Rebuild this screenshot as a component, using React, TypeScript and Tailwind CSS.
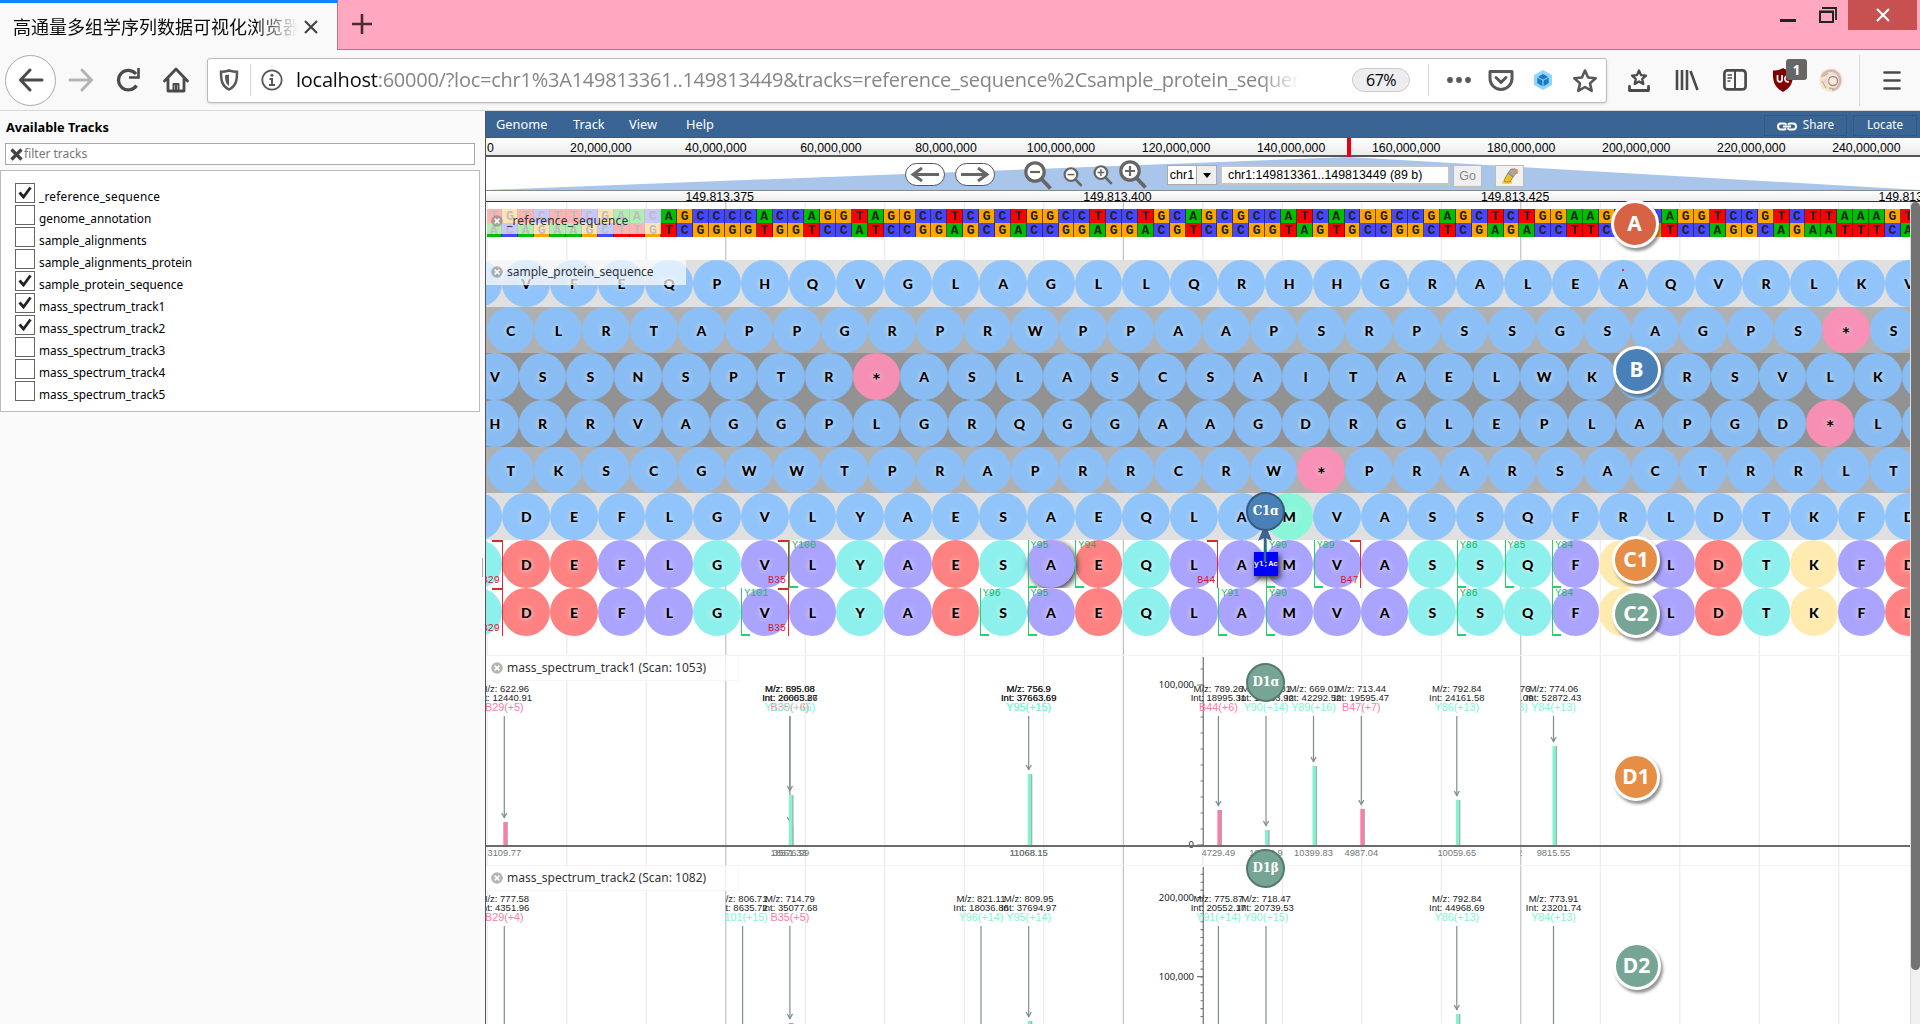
import React from "react";

const SANS = "font-['Noto_Sans',sans-serif]";
const ARIAL = "font-['Liberation_Sans',sans-serif]";
const PITCH = 15.9;
const AA = 47.7;

const TOP = "TGTCTTCGAACAGCCCCACCAGGTAGGCCTCGCTGGCCTCCTGCAGCGCCATCACGGCCGAGCTCTGGAAGCGCAGGTCCGTCTTAAAGT";
const COMP: Record<string, string> = { A: "T", T: "A", G: "C", C: "G" };
const BOTTOM = TOP.split("").map((c) => COMP[c]).join("");
const BASE: Record<string, string> = {
  A: "bg-[#00bf00]",
  C: "bg-[#4747ff]",
  G: "bg-[#ffa500]",
  T: "bg-[#ff0000]",
};

const FRAMES = [
  { bg: "bg-[#e0e0e0]", off: "ml-[-31.3px]", seq: " VFEQPHQVGLAGLLQRHHGRALEAQVRLKV" },
  { bg: "bg-[#b0b0b0]", off: "ml-[0.8px]", seq: "CLRTAPPGRPRWPPAAPSRPSSGSAGPS*S" },
  { bg: "bg-[#929292]", off: "ml-[-14.9px]", seq: "VSSNSPTR*ASLASCSAITAELWKRRSVLK " },
  { bg: "bg-[#929292]", off: "ml-[-14.9px]", seq: "HRRVAGGPLGRQGGAAGDRGLEPLAPGD*L " },
  { bg: "bg-[#b0b0b0]", off: "ml-[0.8px]", seq: "TKSCGWWTPRAPRRCRW*PRARSACTRRLT" },
  { bg: "bg-[#e0e0e0]", off: "ml-[-31.3px]", seq: " DEFLGVLYAESAEQLAMVASSQFRLDTKFD", hot: 17 },
];
const PEPTIDE = " DEFLGVLYAESAEQLAMVASSQFRLDTKFD";

const peptideColor = (c: string) => {
  if ("DE".includes(c)) return "bg-[#ff8282]";
  if ("FLVAM".includes(c)) return "bg-[#aba4ff]";
  if ("KR".includes(c)) return "bg-[#ffebaf]";
  return "bg-[#8df0ec]";
};

const LETTER =
  "text-[14px] font-black text-black [text-shadow:0_0_6px_rgba(255,255,255,0.7),0_0_3px_rgba(255,255,255,0.4)]";

type Mark = [string, number];

function Fragments({ marks }: { marks: Mark[] }) {
  return (
    <>
      {marks.map(([name, k]) => {
        const x = 16.8 + k * AA;
        return name[0] === "Y" ? (
          <div key={name} className="absolute top-0 h-full w-7 border-l border-[#2ecc71]" style={{ left: x }}>
            <span className="absolute left-0.5 top-0 font-['Liberation_Mono',monospace] text-[10px] leading-[11px] text-[#23b862]">
              {name}
            </span>
            <span className="absolute bottom-0 left-0 h-0.5 w-2 bg-[#2ecc71]" />
          </div>
        ) : (
          <div key={name} className="absolute top-0 h-full w-7 border-r border-[#e02c2c]" style={{ left: x - 28 }}>
            <span className="absolute right-0 top-0 h-0.5 w-2.5 bg-[#d42c2c]" />
            <span className="absolute bottom-0.5 right-0.5 font-['Liberation_Mono',monospace] text-[10px] leading-[11px] text-[#d02234]">
              {name}
            </span>
          </div>
        );
      })}
    </>
  );
}

function PeptideRow({ marks, raised }: { marks: Mark[]; raised?: number }) {
  return (
    <div className="relative h-12 overflow-hidden">
      <div className="ml-[-31.3px] flex h-full">
        {PEPTIDE.split("").map((c, i) => (
          <div
            key={i}
            className={`flex h-[48px] w-[47.7px] shrink-0 items-center justify-center rounded-full font-['Lato',sans-serif] ${peptideColor(c)} ${
              i === raised ? "relative shadow-[2px_2px_6px_#333]" : ""
            } ${LETTER}`}
          >
            {c}
          </div>
        ))}
      </div>
      <Fragments marks={marks} />
    </div>
  );
}

function TrackLabel({ children, className }: { children: React.ReactNode; className: string }) {
  return (
    <div
      className={`absolute left-0 flex h-[25px] items-center border-b border-r border-[#f0f0f0]/60 bg-white/70 pl-[5px] text-[12px] text-[#333] ${SANS} ${className}`}
    >
      <svg width="12" height="12" viewBox="0 0 12 12" className="mr-1 shrink-0">
        <circle cx="6" cy="6" r="5.8" fill="#777" opacity=".55" />
        <path d="M3.6 3.6l4.8 4.8M8.4 3.6L3.6 8.4" stroke="#fff" strokeWidth="1.5" />
      </svg>
      <span className="whitespace-nowrap">{children}</span>
    </div>
  );
}

interface Peak {
  x: number;
  mz: string;
  int: string;
  ion: string;
  top: number;
  value?: string;
  clip?: string;
  twice?: boolean;
}

const SPEC1: Peak[] = [
  { x: 504.3, mz: "622.96", int: "12440.91", ion: "B29(+5)", top: 822, value: "3109.77" },
  { x: 789.9, mz: "895.08", int: "20005.27", ion: "B35(+6)", top: 826, value: "3561.33" },
  { x: 789.9, mz: "595.68", int: "26663.86", ion: "Y100(+16)", top: 795, value: "18576.99" },
  { x: 1028.7, mz: "756.9", int: "37663.69", ion: "Y95(+15)", top: 774, value: "11068.15", twice: true },
  { x: 1218.4, mz: "789.26", int: "18995.31", ion: "B44(+6)", top: 810, value: "4729.49" },
  { x: 1266, mz: "733.01", int: "10063.92", ion: "Y90(+14)", top: 830, value: "10249.9" },
  { x: 1313.5, mz: "669.01", int: "42292.52", ion: "Y89(+16)", top: 766, value: "10399.83" },
  { x: 1361.3, mz: "713.44", int: "19595.47", ion: "B47(+7)", top: 809, value: "4987.04" },
  { x: 1456.8, mz: "792.84", int: "24161.58", ion: "Y86(+13)", top: 800, value: "10059.65" },
  { x: 1505.5, mz: "774.76", int: "20155.09", ion: "Y85(+13)", top: 0, value: "9942.52", clip: "url(#right-block)" },
  { x: 1553.5, mz: "774.06", int: "52872.43", ion: "Y84(+13)", top: 746, value: "9815.55" },
];
const SPEC2: Peak[] = [
  { x: 504.3, mz: "777.58", int: "4351.96", ion: "B29(+4)", top: 1080 },
  { x: 742.6, mz: "806.71", int: "8635.72", ion: "Y101(+15)", top: 1080, clip: "url(#left-block)" },
  { x: 789.9, mz: "714.79", int: "35077.68", ion: "B35(+5)", top: 1023 },
  { x: 981, mz: "821.11", int: "18036.86", ion: "Y96(+14)", top: 1080 },
  { x: 1028.7, mz: "809.95", int: "37694.97", ion: "Y95(+14)", top: 1021 },
  { x: 1218.4, mz: "775.87", int: "20552.17", ion: "Y91(+14)", top: 1080 },
  { x: 1266, mz: "718.47", int: "20739.53", ion: "Y90(+15)", top: 1080 },
  { x: 1456.8, mz: "792.84", int: "44968.69", ion: "Y86(+13)", top: 1014 },
  { x: 1553.5, mz: "773.91", int: "23201.74", ion: "Y84(+13)", top: 1080 },
];

function Peaks({ peaks, textTop, base }: { peaks: Peak[]; textTop: number; base: number }) {
  return (
    <>
      {peaks.map((p, i) => {
        const color = p.ion[0] === "B" ? "#ff7aa5" : "#7ff5d2";
        const labels = (
          <>
            <text x={p.x} y={textTop} fontSize="9.5" fill="#222">M/z: {p.mz}</text>
            <text x={p.x} y={textTop + 9} fontSize="9.5" fill="#222">Int: {p.int}</text>
            <text x={p.x} y={textTop + 19} fontSize="10.8" fill={color}>{p.ion}</text>
            {p.value && <text x={p.x} y={base + 9.5} fontSize="9.3" fill="#6f7878">{p.value}</text>}
          </>
        );
        return (
          <g key={i} textAnchor="middle">
            <g clipPath={p.clip}>{labels}</g>
            {p.twice && labels}
            {p.top > 0 && (
              <>
                <path d={`M${p.x} ${textTop + 24}V${p.top - 4}`} stroke="#7f8c8d" strokeWidth="1.2" />
                <path
                  d={`M${p.x - 2.6} ${p.top - 9}L${p.x} ${p.top - 4.5}L${p.x + 2.6} ${p.top - 9}`}
                  stroke="#7f8c8d"
                  strokeWidth="1.3"
                  fill="none"
                />
                <rect x={p.x + 0.4} y={p.top} width="3.2" height={base - p.top} fill="#aaa" />
                <rect x={p.x - 1} y={p.top} width="3.4" height={base - p.top} fill={color} />
              </>
            )}
          </g>
        );
      })}
    </>
  );
}

function Ticks({ from, to, step, x }: { from: number; to: number; step: number; x: number }) {
  const ys: number[] = [];
  for (let y = from; y > to; y -= step) ys.push(y);
  return <path d={ys.map((y) => `M${x - 2.5} ${y}h3`).join("")} stroke="#777" strokeWidth="1.1" />;
}

function Badge({ x, y, color, children }: { x: number; y: number; color: string; children: string }) {
  return (
    <div
      className={`absolute flex h-12 w-12 items-center justify-center rounded-full border-[3px] border-white text-[21px] font-bold text-white shadow-[2px_3px_3px_rgba(60,60,60,0.55)] ${SANS} ${color}`}
      style={{ left: x - 24, top: y - 24 }}
    >
      {children}
    </div>
  );
}

function MiniBadge({ y, color, children }: { y: number; color: string; children: string }) {
  return (
    <div
      className={`absolute left-[760px] flex h-[39px] w-[39px] items-center justify-center rounded-full border-2 font-['DejaVu_Serif',serif] text-[12px] font-bold tracking-[-0.3px] text-white ${color}`}
      style={{ top: y - 19.5 }}
    >
      {children}
    </div>
  );
}

function Magnifier({ big, plus }: { big?: boolean; plus?: boolean }) {
  return (
    <svg
      viewBox="0 0 28 29"
      className={big ? "h-[29px] w-[28px]" : "h-[20px] w-[20px]"}
      fill="none"
      stroke="#666"
    >
      <circle cx="11" cy="11" r="9.2" strokeWidth="3.2" fill="#fff" />
      <path d="M17.5 18L26.5 27.5" strokeWidth="3.8" />
      <path d={plus ? "M6 11h10M11 6v10" : "M6 11h10"} strokeWidth="2.2" />
    </svg>
  );
}

function TabStrip() {
  return (
    <div className="flex h-[50px] border-b border-[#b5768a] bg-[#ffa8c0]">
      <div className="flex h-[50px] w-[337.5px] shrink-0 items-center border-r border-t-[3px] border-r-[#b5768a] border-t-[#0a84ff] bg-[#f9f9fa] pl-[13px]">
        <div className="w-[284px] overflow-hidden whitespace-nowrap font-['Noto_Sans_CJK_SC',sans-serif] text-[18px] text-[#0c0c0d] [mask-image:linear-gradient(to_right,black_86%,transparent)]">
          高通量多组学序列数据可视化浏览器
        </div>
        <svg width="14" height="14" viewBox="0 0 14 14" className="ml-[7px]">
          <path d="M1 1l12 12M13 1L1 13" stroke="#444" strokeWidth="2.2" />
        </svg>
      </div>
      <svg width="20" height="20" viewBox="0 0 20 20" className="ml-3.5 mt-3.5">
        <path d="M10 0v20M0 10h20" stroke="#4a2b35" strokeWidth="2.6" />
      </svg>
      <div className="ml-auto mr-[3px] flex">
        <svg width="68" height="30" viewBox="0 0 68 30" fill="none" stroke="#222">
          <path d="M0 20.5h16" strokeWidth="3" />
          <path d="M40 12h13v10H40zM39 11.5h15" strokeWidth="2" />
          <path d="M42 8h14v12" strokeWidth="1.8" />
        </svg>
        <div className="flex h-[30px] w-[69px] items-center justify-center bg-[#c75050]">
          <svg width="14" height="14" viewBox="0 0 14 14">
            <path d="M1 1l12 12M13 1L1 13" stroke="#fff" strokeWidth="2.2" />
          </svg>
        </div>
      </div>
    </div>
  );
}

function Toolbar() {
  const ic = "shrink-0";
  return (
    <div className="flex h-[61px] items-center border-b border-[#d8d8d8] bg-[#f9f9fa] pl-[5px]">
      <div className="flex h-[51px] w-[51px] shrink-0 items-center justify-center rounded-full border border-[#aaa] bg-white">
        <svg width="26" height="24" viewBox="0 0 26 24" fill="none" stroke="#4a4a4c" strokeWidth="3" strokeLinecap="round" strokeLinejoin="round">
          <path d="M24 12H3M12 2L2.5 12L12 22" />
        </svg>
      </div>
      <svg width="26" height="24" viewBox="0 0 26 24" fill="none" stroke="#b4b4b5" strokeWidth="3" strokeLinecap="round" strokeLinejoin="round" className={`ml-3 ${ic}`}>
        <path d="M2 12h21M14 2l9.5 10L14 22" />
      </svg>
      <svg width="26" height="26" viewBox="0 0 26 26" fill="none" stroke="#4a4a4c" strokeWidth="3.2" className={`ml-[22px] ${ic}`}>
        <path d="M20.5 18.5A9.8 9.8 0 1 1 20 7" />
        <path d="M22.5 1v9.5H13" strokeWidth="2.6" />
      </svg>
      <svg width="26" height="26" viewBox="0 0 26 26" fill="none" stroke="#4a4a4c" strokeWidth="2.8" strokeLinejoin="round" className={`ml-[21px] ${ic}`}>
        <path d="M1.5 14L13 2l11.5 12M5 12v12h16V12" strokeLinecap="round" />
        <path d="M13 24v-8M10.5 17h5v7h-5z" strokeWidth="2" />
      </svg>
      <div className="ml-[18px] flex h-[45px] w-[1400px] shrink-0 items-center rounded-[3px] border border-[#bbb] bg-white pl-[11px] shadow-sm">
        <svg width="20" height="22" viewBox="0 0 20 22" className={ic}>
          <path d="M10 1.5c3 1 5 1.3 8 1.3 0 8-.5 14-8 17.7C2.5 16.8 2 10.8 2 2.8c3 0 5-.3 8-1.3z" fill="none" stroke="#58585a" strokeWidth="2.5" />
          <path d="M10 5.5c-1.5.5-2.5.6-4 .7 0 4.5.6 8.5 4 10.5z" fill="#58585a" />
        </svg>
        <div className="ml-[11px] h-8 w-px shrink-0 bg-[#d7d7db]" />
        <svg width="22" height="22" viewBox="0 0 22 22" className={`ml-[10px] ${ic}`}>
          <circle cx="11" cy="11" r="9.7" fill="none" stroke="#58585a" strokeWidth="1.8" />
          <path d="M8.5 10H11v6M8 16h6" stroke="#58585a" strokeWidth="2" fill="none" />
          <circle cx="11" cy="6.3" r="1.5" fill="#58585a" />
        </svg>
        <div className="ml-[13px] w-[1004px] shrink-0 overflow-hidden whitespace-nowrap font-['Open_Sans',sans-serif] text-[20px] tracking-[-0.24px] text-[#85858a] [mask-image:linear-gradient(to_right,black_96%,transparent)]">
          <span className="text-[#0c0c0d]">localhost</span>
          :60000/?loc=chr1%3A149813361..149813449&amp;tracks=reference_sequence%2Csample_protein_sequence
        </div>
        <div className="ml-[52px] flex h-6 w-[58px] shrink-0 items-center justify-center rounded-full border border-[#ccc] bg-[#ededf0] font-['Open_Sans',sans-serif] text-[16px] tracking-[-0.5px] text-black">
          67%
        </div>
        <div className="ml-[18px] h-8 w-px shrink-0 bg-[#d7d7db]" />
        <svg width="24" height="6" viewBox="0 0 24 6" fill="#58585a" className={`ml-[18px] ${ic}`}>
          <circle cx="3" cy="3" r="2.9" />
          <circle cx="12" cy="3" r="2.9" />
          <circle cx="21" cy="3" r="2.9" />
        </svg>
        <svg width="26" height="24" viewBox="0 0 26 24" fill="none" stroke="#58585a" strokeWidth="3" strokeLinejoin="round" strokeLinecap="round" className={`ml-[17px] ${ic}`}>
          <path d="M2 3.5h22v7a11 11 0 0 1-22 0z" />
          <path d="M8 9.5l5 4.800l5-4.800" />
        </svg>
        <svg width="20" height="22" viewBox="0 0 20 22" className={`ml-[19px] ${ic}`}>
          <path d="M10 1l9 5v10l-9 5l-9-5V6z" fill="#8ed6fb" />
          <path d="M10 5l5.7 3.2v6L10 17.5l-5.7-3.3v-6z" fill="#1c78c0" />
          <path d="M4 8l6 3.2L16 8M10 11v7" stroke="#9fdcff" strokeWidth="1" fill="none" />
        </svg>
        <svg width="26" height="25" viewBox="0 0 26 25" className={`ml-[19px] ${ic}`}>
          <path d="M13 2.5l3.1 7 7.6.8-5.7 5.1 1.7 7.5-6.7-3.9-6.7 3.9L8 15.4 2.3 10.3l7.6-.8z" fill="none" stroke="#58585a" strokeWidth="2.6" strokeLinejoin="round" />
        </svg>
      </div>
      <svg width="24" height="25" viewBox="0 0 24 25" fill="none" stroke="#4a4a4c" strokeLinejoin="round" className={`ml-5 ${ic}`}>
        <path d="M12 2.5l2 4.6 5 .5-3.8 3.4 1.1 5-4.3-2.6L7.7 16l1.1-5L5 7.6l5-.5z" strokeWidth="2.3" />
        <path d="M2.5 18.5v4h19v-4" strokeWidth="2.8" strokeLinecap="round" />
      </svg>
      <svg width="24" height="22" viewBox="0 0 24 22" stroke="#4a4a4c" strokeWidth="2.6" className={`ml-6 ${ic}`}>
        <path d="M2 1v20M7 1v20M12 1v20M15.5 2l7 19" fill="none" />
      </svg>
      <svg width="24" height="22" viewBox="0 0 24 22" fill="none" stroke="#4a4a4c" className={`ml-6 ${ic}`}>
        <rect x="1.4" y="1.4" width="21.2" height="19" rx="3" strokeWidth="2.7" />
        <path d="M12 1v20" strokeWidth="2" />
        <path d="M4.5 6h4.5M4.5 9h4.5M4.5 12h3" strokeWidth="1.3" />
      </svg>
      <div className="relative ml-[25px] h-6 w-[23px] shrink-0">
        <svg width="22" height="24" viewBox="0 0 22 24">
          <path d="M11 0c3 2 6 2.5 10 2.5C21.5 13 20 19 11 24C2 19 .5 13 1 2.5 5 2.5 8 2 11 0z" fill="#800000" />
          <path d="M5.5 7v4.5a2.3 2.3 0 0 0 4.6 0V7M17 8a3 3 0 1 0 0 5.5" fill="none" stroke="#fff" strokeWidth="1.7" />
        </svg>
        <div className={`absolute left-[14px] top-[-9px] flex h-[21px] w-[21px] items-center justify-center rounded-[3px] bg-[#666] text-[14px] font-bold text-white ${SANS}`}>
          1
        </div>
      </div>
      <svg width="24" height="24" viewBox="0 0 24 24" className={`ml-6 ${ic}`}>
        <circle cx="12" cy="12" r="11.5" fill="#efe3d3" />
        <path d="M3 9c2-7 13-9 17-1 3 6-1 14-7 14" fill="none" stroke="#d9b3b1" strokeWidth="2.5" />
        <circle cx="14" cy="13" r="4.5" fill="#f8e6dc" stroke="#a08c88" strokeWidth="1.3" />
        <path d="M3 13l4 7M5 8l4-3M10 20l5 1" stroke="#c3b66f" strokeWidth="1.3" />
        <circle cx="7" cy="13" r="2.5" fill="#f5d2d2" />
      </svg>
      <div className="ml-4 h-[51px] w-px shrink-0 bg-[#d7d7db]" />
      <svg width="18" height="19" viewBox="0 0 18 19" stroke="#4a4a4c" strokeWidth="2.6" strokeLinecap="round" className={`ml-[23px] ${ic}`}>
        <path d="M1.5 1.5h15M1.5 9.5h15M1.5 17.5h15" />
      </svg>
    </div>
  );
}

const TRACKS: [string, boolean][] = [
  ["_reference_sequence", true],
  ["genome_annotation", false],
  ["sample_alignments", false],
  ["sample_alignments_protein", false],
  ["sample_protein_sequence", true],
  ["mass_spectrum_track1", true],
  ["mass_spectrum_track2", true],
  ["mass_spectrum_track3", false],
  ["mass_spectrum_track4", false],
  ["mass_spectrum_track5", false],
];

function TrackSelector() {
  return (
    <div className={`flex w-[486px] shrink-0 border-r border-[#555] bg-[#fafafa] text-black ${SANS}`}>
      <div className="flex w-[480px] flex-col">
        <div className="flex h-8 items-center pl-1.5 pt-px text-[12.8px] font-bold">Available Tracks</div>
        <div className="ml-[5px] flex h-[22px] w-[470px] items-center border border-[#aaa] bg-white pl-1 text-[12px] text-[#777]">
          <svg width="13" height="13" viewBox="0 0 13 13" className="mr-px">
            <path d="M1.5 1.5l10 10M11.5 1.5l-10 10" stroke="#444" strokeWidth="3.2" />
          </svg>
          filter tracks
        </div>
        <div className="mt-[5px] flex h-[242px] flex-col border border-[#bbb] bg-white pl-3.5 pt-3">
          {TRACKS.map(([name, on], i) => (
            <div key={name} className={`flex h-[22px] text-[11.8px] ${i === 0 ? "tracking-[0.25px]" : ""}`}>
              <div className="mr-1 flex h-5 w-5 shrink-0 items-center justify-center border border-[#666] bg-white">
                {on && (
                  <svg width="14" height="13" viewBox="0 0 14 13" className="mb-0.5">
                    <path d="M1.5 6.5l4 4.5L12.5 1.5" fill="none" stroke="#222" strokeWidth="2.8" />
                  </svg>
                )}
              </div>
              <span className="mt-1 leading-[18px]">{name}</span>
            </div>
          ))}
        </div>
      </div>
      <div className="ml-0.5 mt-[447px] h-[19px] w-px bg-[#aaa]" />
    </div>
  );
}

function MenuBar() {
  return (
    <div className={`flex h-[26px] items-center bg-[#396494] pt-0.5 text-[12.8px] text-white ${SANS}`}>
      <span className="ml-2.5 w-[77px]">Genome</span>
      <span className="w-[56px]">Track</span>
      <span className="w-[57px]">View</span>
      <span>Help</span>
      <div className="ml-auto mr-1.5 flex h-[21px] w-[83px] items-center justify-center border border-[#325a88] text-[11.7px]">
        <svg width="20" height="9" viewBox="0 0 20 9" fill="none" stroke="#fff" strokeWidth="2" className="mr-1.5 mt-0.5">
          <path d="M9 6.5A3 3 0 0 1 7 7.5H4a3 3 0 0 1 0-6h3a3 3 0 0 1 2.5 1.3M11 2.5a3 3 0 0 1 2-1h3a3 3 0 0 1 0 6h-3a3 3 0 0 1-2.500-1.300M6 4.5h8" />
        </svg>
        Share
      </div>
      <div className="mr-[3px] flex h-[21px] w-[64px] items-center justify-center border border-[#325a88] text-[11.7px]">Locate</div>
    </div>
  );
}

const OVERVIEW = Array.from({ length: 12 }, (_, i) => `${(i + 1) * 20},000,000`);

function Overview() {
  return (
    <div className={`relative flex h-5 items-center border-b-2 border-t border-[#555] bg-gradient-to-b from-white to-[#ececec] pt-[3px] text-[12.3px] text-black ${ARIAL}`}>
      <span className="w-[57.3px] shrink-0 pl-px">0</span>
      <div className="flex">
        {OVERVIEW.map((t) => (
          <span key={t} className="w-[115.06px] shrink-0 text-center">{t}</span>
        ))}
      </div>
      <div className="absolute left-[861px] top-0 h-[19px] w-1 bg-red-600" />
    </div>
  );
}

function Navigation() {
  const pill = "flex h-[23px] w-[40px] items-center justify-center rounded-full border-[1.5px] border-[#555] bg-white";
  return (
    <div className="relative h-[33px] bg-white">
      <svg className="absolute inset-0" width="1434" height="33" viewBox="0 0 1434 33">
        <path d="M0 33L862 0L1434 33z" fill="#a9c6ea" />
      </svg>
      <div className={`relative flex items-start pl-[419px] pt-1.5 text-[13px] text-black ${ARIAL}`}>
        <div className={pill}>
          <svg width="30" height="15" viewBox="0 0 30 15" fill="none" stroke="#666" strokeWidth="3"><path d="M29 7.5H3M12 1L3 7.5L12 14" /></svg>
        </div>
        <div className={`ml-2.5 ${pill}`}>
          <svg width="30" height="15" viewBox="0 0 30 15" fill="none" stroke="#666" strokeWidth="3"><path d="M1 7.5h26M18 1l9 6.5L18 14" /></svg>
        </div>
        <div className="ml-[29px] mt-[-2px]"><Magnifier big /></div>
        <div className="ml-[11px] mt-[4px]"><Magnifier /></div>
        <div className="ml-[10px] mt-[2px]"><Magnifier plus /></div>
        <div className="ml-[6px] mt-[-3px]"><Magnifier big plus /></div>
        <div className="ml-[20px] mt-[2px] flex h-[20px] w-[50px] border border-[#aaa] bg-white">
          <span className="flex w-7 items-center justify-center text-[12.5px]">chr1</span>
          <span className="flex flex-1 items-center justify-center border-l border-[#aaa] bg-[#eee]">
            <svg width="8" height="5" viewBox="0 0 8 5"><path d="M0 0h8L4 5z" /></svg>
          </span>
        </div>
        <div className="ml-[3px] mt-[2px] flex h-[20px] w-[230px] items-center whitespace-nowrap border-2 border-[#c5c5c5] bg-white pl-1.5 pt-px text-[12.4px]">
          chr1:149813361..149813449 (89 b)
        </div>
        <div className="ml-[3px] mt-[2px] flex h-[22px] w-[29px] items-center justify-center border border-[#bbb] bg-[#efefef] text-[12.5px] text-[#888]">Go</div>
        <div className="ml-[13px] mt-[2px] flex h-[22px] w-[29px] items-center justify-center border border-[#bbb] bg-[#f1f1f1]">
          <svg width="18" height="17" viewBox="0 0 18 17">
            <path d="M1 13h10v3H1z" fill="#f6d63a" />
            <path d="M3 12l4-7 5 4-3 5H4z" fill="#e8c02a" stroke="#8c7a2a" strokeWidth=".8" />
            <path d="M7 5l3-4h4l2 3-4 5z" fill="#a8a8a8" stroke="#777" strokeWidth=".8" />
            <path d="M13 1l3 1v4" stroke="#f08a3c" strokeWidth="1.5" fill="none" />
          </svg>
        </div>
      </div>
    </div>
  );
}

function LocationRuler() {
  return (
    <div className={`flex h-3 items-center overflow-hidden border-b border-t border-b-[#333] border-t-[#888] bg-gradient-to-b from-white to-[#ececec] pl-[184.5px] pt-[2px] text-[12.3px] leading-none text-black ${ARIAL}`}>
      {["149,813,375", "149,813,400", "149,813,425", "149,813,450"].map((t) => (
        <span key={t} className="w-[397.7px] shrink-0 pl-[15px]">{t}</span>
      ))}
    </div>
  );
}

function GridLines() {
  return (
    <svg className="absolute inset-0" width="1424" height="822" viewBox="0 0 1424 822">
      {Array.from({ length: 18 }, (_, i) => (
        <path
          key={i}
          d={`M${1.3 + i * PITCH * 5} 0V822`}
          stroke={i % 5 === 3 ? "#b5b5b5" : "#ededed"}
          strokeWidth={i % 5 === 3 ? 1 : 1.3}
        />
      ))}
    </svg>
  );
}

function BaseRow({ seq }: { seq: string }) {
  return (
    <div className="flex h-[14px]">
      {seq.split("").map((c, i) => (
        <div
          key={i}
          className={`flex h-full w-[15.9px] shrink-0 items-center justify-center border-r border-[#222]/70 font-['Liberation_Mono',monospace] text-[13px] font-bold leading-none text-[#222] ${BASE[c]}`}
        >
          {c}
        </div>
      ))}
    </div>
  );
}

function Tracks() {
  return (
    <div className="relative h-[822px] w-[1424px] shrink-0 overflow-hidden bg-white">
      <GridLines />
      <div className="relative flex h-[58px] flex-col pl-[0.5px] pt-[7px]">
        <BaseRow seq={TOP} />
        <BaseRow seq={BOTTOM} />
        <TrackLabel className="top-[7px] w-[175px] border-transparent tracking-[0.15px]">_reference_sequence</TrackLabel>
      </div>
      <div className="relative">
        {FRAMES.map((f, r) => (
          <div key={r} className={`h-[46.7px] overflow-hidden ${f.bg}`}>
            <div className={`flex h-full ${f.off}`}>
              {f.seq.split("").map((c, i) => (
                <div
                  key={i}
                  className={`flex h-full w-[47.7px] shrink-0 items-center justify-center rounded-full ${
                    c === "*"
                      ? "bg-[#fb90b6]/95 pt-1 font-['DejaVu_Sans',sans-serif]"
                      : i === f.hot
                        ? "bg-[#89f7d7] font-['Lato',sans-serif]"
                        : "bg-[#87c1fd]/90 font-['Lato',sans-serif]"
                  } ${LETTER}`}
                >
                  {c}
                </div>
              ))}
            </div>
          </div>
        ))}
        <TrackLabel className="top-0 w-[200px]">sample_protein_sequence</TrackLabel>
      </div>
      <div className="relative">
        <PeptideRow
          raised={12}
          marks={[["B29", 0], ["B35", 6], ["Y100", 6], ["Y95", 11], ["Y94", 12], ["B44", 15], ["Y90", 16], ["Y89", 17], ["B47", 18], ["Y86", 20], ["Y85", 21], ["Y84", 22]]}
        />
        <PeptideRow
          marks={[["B29", 0], ["Y101", 5], ["B35", 6], ["Y96", 10], ["Y95", 11], ["Y91", 15], ["Y90", 16], ["Y86", 20], ["Y84", 22]]}
        />
      </div>
      <div className={`relative mt-[19px] h-[210px] border-t border-[#f3f3f3] ${ARIAL}`}>
        <svg className="block" width="1424" height="209" viewBox="486 656 1424 209">
          <defs>
            <clipPath id="right-block"><rect x="1520.5" y="600" width="100" height="300" /></clipPath>
          </defs>
          <path d="M1203.3 657V846" stroke="#777" strokeWidth="1.2" />
          <Ticks from={845} to={660} step={16} x={1203} />
          <path d="M1197 845h6M1197 685h6" stroke="#777" strokeWidth="1.2" />
          <g fontSize="9.5" fill="#222" textAnchor="end">
            <text x="1194" y="688" className={SANS}>100,000</text>
            <text x="1194" y="848" className={SANS}>0</text>
          </g>
          <Peaks peaks={SPEC1} textTop={692} base={846} />
          <path d="M486 846H1910" stroke="#6e6a6a" strokeWidth="1.8" />
        </svg>
        <TrackLabel className="top-0 w-[253px]">mass_spectrum_track1 (Scan: 1053)</TrackLabel>
      </div>
      <div className={`relative h-[159px] border-t border-[#f3f3f3] ${ARIAL}`}>
        <svg className="block" width="1424" height="158" viewBox="486 866 1424 158">
          <defs>
            <clipPath id="left-block"><rect x="725.5" y="860" width="100" height="300" /></clipPath>
          </defs>
          <path d="M1203.3 867V1024" stroke="#777" strokeWidth="1.2" />
          <Ticks from={1016.5} to={867} step={7.9} x={1203} />
          <path d="M1197 897.7h6M1197 976.7h6" stroke="#777" strokeWidth="1.2" />
          <g fontSize="9.5" fill="#222" textAnchor="end">
            <text x="1194" y="901" className={SANS}>200,000</text>
            <text x="1194" y="980" className={SANS}>100,000</text>
          </g>
          <Peaks peaks={SPEC2} textTop={902} base={1100} />
        </svg>
        <TrackLabel className="top-0 w-[253px]">mass_spectrum_track2 (Scan: 1082)</TrackLabel>
      </div>
    </div>
  );
}

function Annotations() {
  return (
    <div className="absolute left-0 top-0">
      <div className="absolute left-[768px] top-[350px] flex h-6 w-6 items-center justify-center overflow-hidden bg-[#0000ff] font-['Liberation_Mono',monospace] text-[8px] font-bold text-white shadow-[2px_3px_6px_#333]">
        yl;Ac
      </div>
      <svg className="absolute left-[770px] top-[322px]" width="18" height="40" viewBox="0 0 18 40">
        <path d="M9 4V38" stroke="#3b6493" strokeWidth="2.5" />
        <path d="M9 0L16 17L9 13.5L2 17z" fill="#3b6493" />
      </svg>
      <MiniBadge y={309} color="bg-[#4a80b8] border-[#38597f]">C1ɑ</MiniBadge>
      <MiniBadge y={480} color="bg-[#76a596] border-[#537b6d]">D1ɑ</MiniBadge>
      <MiniBadge y={666} color="bg-[#76a596] border-[#537b6d]">D1β</MiniBadge>
      <div className="absolute left-[1136px] top-[67px] h-[2px] w-[2px] bg-[#e03048]" />
      <Badge x={1148.5} y={22} color="bg-[#d86344]">A</Badge>
      <Badge x={1150.5} y={168} color="bg-[#4a80b8]">B</Badge>
      <Badge x={1150} y={358} color="bg-[#e68e46]">C1</Badge>
      <Badge x={1150} y={412} color="bg-[#76a596]">C2</Badge>
      <Badge x={1150} y={575} color="bg-[#e68e46]">D1</Badge>
      <Badge x={1150.5} y={764} color="bg-[#76a596]">D2</Badge>
    </div>
  );
}

export default function App() {
  return (
    <div className="flex h-[1024px] w-[1920px] flex-col overflow-hidden bg-white">
      <TabStrip />
      <Toolbar />
      <div className="flex flex-1">
        <TrackSelector />
        <div className="flex w-[1434px] flex-col overflow-hidden">
          <MenuBar />
          <Overview />
          <Navigation />
          <LocationRuler />
          <div className="relative flex">
            <Tracks />
            <div className="w-2.5 border-l border-[#ddd] bg-[#f0f0f0]">
              <div className="h-[768px] rounded-full bg-[#737373]" />
            </div>
            <Annotations />
          </div>
        </div>
      </div>
    </div>
  );
}
